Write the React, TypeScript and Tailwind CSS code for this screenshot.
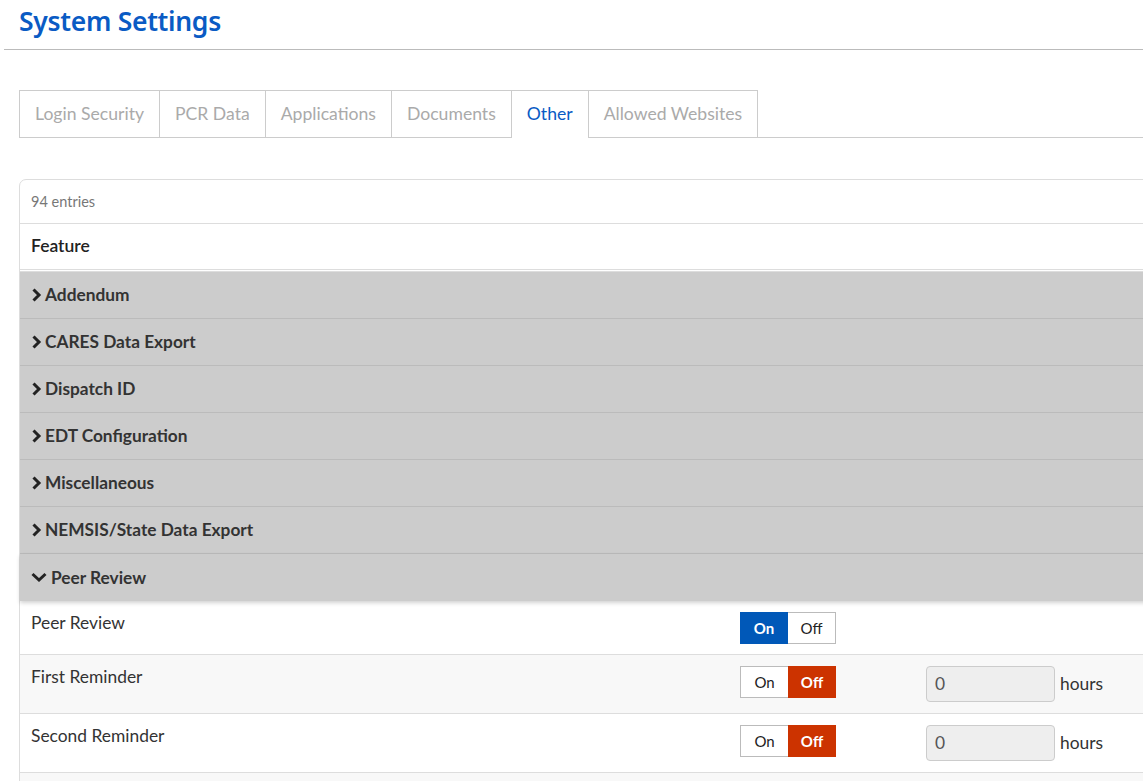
import { useState } from "react";

const tabs = ["Login Security", "PCR Data", "Applications", "Documents", "Other", "Allowed Websites"];

const groups = [
  "Addendum",
  "CARES Data Export",
  "Dispatch ID",
  "EDT Configuration",
  "Miscellaneous",
  "NEMSIS/State Data Export",
];

interface Setting {
  label: string;
  on: boolean;
  hours?: string;
}

const peerSettings: Setting[] = [
  { label: "Peer Review", on: true },
  { label: "First Reminder", on: false, hours: "0" },
  { label: "Second Reminder", on: false, hours: "0" },
];

function ChevronRight() {
  return (
    <svg className="w-[11px] h-[14px] shrink-0" viewBox="0 0 11 14">
      <path d="M2.5 1.5l5.5 5.5-5.5 5.5" fill="none" stroke="#222" strokeWidth={3} strokeLinejoin="miter" />
    </svg>
  );
}

function ChevronDown() {
  return (
    <svg className="w-[16px] h-[11px] shrink-0" viewBox="0 0 16 11">
      <path d="M1.5 2l6.5 6 6.5-6" fill="none" stroke="#222" strokeWidth={3} strokeLinejoin="miter" />
    </svg>
  );
}

function Toggle({ on }: { on: boolean }) {
  return (
    <div className="flex h-[32px] text-[15px] font-bold">
      <span
        className={`w-[48px] flex items-center justify-center border ${
          on ? "bg-[#0058b8] border-[#0058b8] text-white" : "bg-white border-[#bbb] border-r-0 text-[#222] font-normal"
        }`}
      >
        On
      </span>
      <span
        className={`w-[48px] flex items-center justify-center border ${
          on ? "bg-white border-[#bbb] border-l-0 text-[#222] font-normal" : "bg-[#cc3300] border-[#cc3300] text-white"
        }`}
      >
        Off
      </span>
    </div>
  );
}

export default function App() {
  const [active] = useState("Other");

  return (
    <div className="w-full min-h-screen bg-white overflow-hidden font-['Lato',sans-serif] text-[#333]">
      <div className="pl-[19px] pt-[3px] h-[49px]">
        <h1 className="text-[26.5px] font-semibold tracking-[-0.3px] text-[#0a5bc4] font-['Noto_Sans',sans-serif] leading-[36px]">
          System Settings
        </h1>
      </div>
      <div className="ml-[4px] border-t border-[#bbb]" />

      {/* Tabs */}
      <div className="ml-[19px] mt-[40px] flex border-b border-[#ccc] h-[48px]">
        {tabs.map((t, i) => (
          <div
            key={t}
            className={`px-[15px] flex items-center text-[17.6px] border-t border-r border-[#ccc] ${
              i === 0 ? "border-l" : ""
            } ${t === active ? "text-[#0a5bc4] bg-white -mb-px h-[48px]" : "text-[#aaa]"}`}
          >
            {t}
          </div>
        ))}
      </div>

      {/* Table card */}
      <div className="ml-[19px] mr-[-12px] mt-[41px] border border-[#ddd] rounded-tl-[7px]">
        <div className="h-[44px] flex items-center pl-[11px] text-[14.5px] text-[#777] border-b border-[#ddd]">
          94 entries
        </div>
        <div className="h-[48px] flex items-center pl-[11px] text-[17.5px] font-semibold text-[#222] border-b-[3px] border-double border-[#ddd]">
          Feature
        </div>
        {groups.map((g) => (
          <div
            key={g}
            className="h-[47px] flex items-center gap-[3px] pl-[11px] bg-[#cccccc] border-b border-[#bbb] text-[17.3px] font-bold text-[#333]"
          >
            <ChevronRight />
            {g}
          </div>
        ))}
        <div className="h-[47px] flex items-center gap-[4px] pl-[11px] bg-[#cccccc] text-[17.3px] font-bold text-[#333] shadow-[0_2px_4px_rgba(0,0,0,0.18)] relative">
          <ChevronDown />
          Peer Review
        </div>
        {peerSettings.map((s, i) => (
          <div
            key={s.label}
            className={`flex items-start border-b border-[#ddd] pl-[11px] ${
              i % 2 === 1 ? "bg-[#f8f8f8]" : "bg-white"
            } ${s.hours ? "h-[59px] pt-[11px]" : "h-[54px] pt-[11px]"}`}
          >
            <div className="w-[709px] text-[17.4px] text-[#333] leading-[22px]">{s.label}</div>
            <Toggle on={s.on} />
            {s.hours && (
              <div className="ml-[90px] flex items-center">
                <div className="w-[129px] h-[36px] bg-[#eee] border border-[#ccc] rounded-[4px] flex items-center pl-[8px] text-[17.4px] text-[#555]">
                  {s.hours}
                </div>
                <span className="ml-[5px] text-[17.4px] text-[#333]">hours</span>
              </div>
            )}
          </div>
        ))}
        <div className="h-[40px] bg-[#f8f8f8]" />
      </div>
    </div>
  );
}
